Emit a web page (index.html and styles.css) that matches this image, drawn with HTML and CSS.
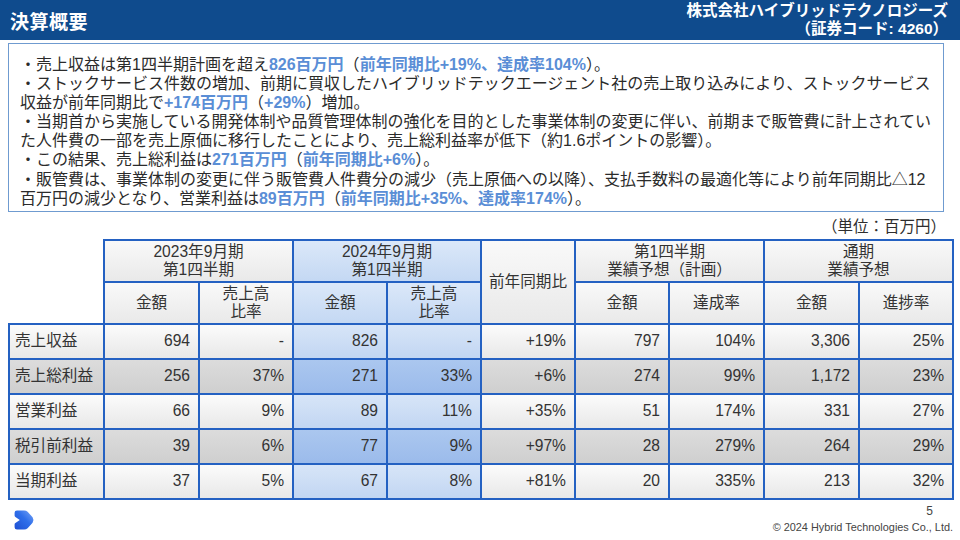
FILE: index.html
```html
<!DOCTYPE html>
<html lang="ja">
<head>
<meta charset="utf-8">
<title>決算概要</title>
<link rel="stylesheet" href="styles.css">
</head>
<body>
<header class="topbar">
  <div class="title">決算概要</div>
  <div class="company">株式会社ハイブリッドテクノロジーズ<br>（証券コード: 4260）</div>
</header>

<section class="summary">
  <div>・売上収益は第1四半期計画を超え<span class="hl">826百万円</span>（<span class="hl">前年同期比+19%、達成率104%</span>）。</div>
  <div>・ストックサービス件数の増加、前期に買収したハイブリッドテックエージェント社の売上取り込みにより、ストックサービス<br>収益が前年同期比で<span class="hl">+174百万円</span>（<span class="hl">+29%</span>）増加。</div>
  <div>・当期首から実施している開発体制や品質管理体制の強化を目的とした事業体制の変更に伴い、前期まで販管費に計上されてい<br>た人件費の一部を売上原価に移行したことにより、売上総利益率が低下（約1.6ポイントの影響）。</div>
  <div>・この結果、売上総利益は<span class="hl">271百万円</span>（<span class="hl">前年同期比+6%</span>）。</div>
  <div>・販管費は、事業体制の変更に伴う販管費人件費分の減少（売上原価への以降）、支払手数料の最適化等により前年同期比△12<br>百万円の減少となり、営業利益は<span class="hl">89百万円</span>（<span class="hl">前年同期比+35%、達成率174%</span>）。</div>
</section>

<div class="unit">（単位：百万円）</div>

<table class="fin">
  <colgroup>
    <col class="c95"><col class="c95"><col class="c94"><col class="c94"><col class="c94">
    <col class="c94"><col class="c94"><col class="c95"><col class="c95"><col class="c94">
  </colgroup>
  <thead>
    <tr class="h1">
      <th class="blank" rowspan="2"></th>
      <th class="hg" colspan="2">2023年9月期<br>第1四半期</th>
      <th class="hb" colspan="2">2024年9月期<br>第1四半期</th>
      <th class="hg" rowspan="2">前年同期比</th>
      <th class="hg" colspan="2">第1四半期<br>業績予想（計画）</th>
      <th class="hg" colspan="2">通期<br>業績予想</th>
    </tr>
    <tr class="h2">
      <th class="hg">金額</th>
      <th class="hg">売上高<br>比率</th>
      <th class="hb">金額</th>
      <th class="hb">売上高<br>比率</th>
      <th class="hg">金額</th>
      <th class="hg">達成率</th>
      <th class="hg">金額</th>
      <th class="hg">進捗率</th>
    </tr>
  </thead>
  <tbody>
    <tr class="odd">
      <td class="lbl">売上収益</td><td>694</td><td>-</td><td class="b">826</td><td class="b">-</td><td>+19%</td><td>797</td><td>104%</td><td>3,306</td><td>25%</td>
    </tr>
    <tr class="even">
      <td class="lbl">売上総利益</td><td>256</td><td>37%</td><td class="b">271</td><td class="b">33%</td><td>+6%</td><td>274</td><td>99%</td><td>1,172</td><td>23%</td>
    </tr>
    <tr class="odd">
      <td class="lbl">営業利益</td><td>66</td><td>9%</td><td class="b">89</td><td class="b">11%</td><td>+35%</td><td>51</td><td>174%</td><td>331</td><td>27%</td>
    </tr>
    <tr class="even">
      <td class="lbl">税引前利益</td><td>39</td><td>6%</td><td class="b">77</td><td class="b">9%</td><td>+97%</td><td>28</td><td>279%</td><td>264</td><td>29%</td>
    </tr>
    <tr class="odd">
      <td class="lbl">当期利益</td><td>37</td><td>5%</td><td class="b">67</td><td class="b">8%</td><td>+81%</td><td>20</td><td>335%</td><td>213</td><td>32%</td>
    </tr>
  </tbody>
</table>

<footer class="foot">
  <svg class="logo" viewBox="0 0 24 24" width="24" height="24" aria-label="logo">
    <defs>
      <linearGradient id="lg" x1="0" y1="1" x2="1" y2="0">
        <stop offset="0" stop-color="#1d4fd2"/>
        <stop offset="0.55" stop-color="#2f6fea"/>
        <stop offset="1" stop-color="#7aa6f6"/>
      </linearGradient>
    </defs>
    <path d="M5 2.5 H12.2 Q14.2 2.5 15.6 3.8 L20.6 9.2 Q22.4 12 20.6 14.8 L15.6 20.2 Q14.2 21.5 12.2 21.5 H5 Q2.6 21.5 2.6 19.2 V16.4 Q2.6 15.5 3.4 15 L7.8 12 L3.4 9 Q2.6 8.5 2.6 7.6 V4.8 Q2.6 2.5 5 2.5 Z" fill="url(#lg)"/>
  </svg>
  <div class="foot-right">
    <div class="page">5</div>
    <div class="copy">© 2024 Hybrid Technologies Co., Ltd.</div>
  </div>
</footer>
</body>
</html>
```

FILE: styles.css
```css
html, body {
  margin: 0;
  padding: 0;
}
body {
  width: 960px;
  height: 540px;
  overflow: hidden;
  background: #ffffff;
  font-family: "Liberation Sans", "Noto Sans CJK JP", sans-serif;
  color: #2e2e2e;
}

.topbar {
  height: 40px;
  background: #0f4b8d;
  color: #ffffff;
  display: flex;
  justify-content: space-between;
  align-items: center;
  padding: 0 12px 0 10px;
}
.title {
  font-size: 19px;
  font-weight: bold;
  letter-spacing: 0.5px;
}
.company {
  text-align: right;
  font-size: 15.5px;
  font-weight: bold;
  line-height: 18px;
}

.summary {
  margin: 3px 16px 0 8px;
  border: 1.5px solid #6f9bd0;
  padding: 11px 4px 3px 11px;
  font-size: 16px;
  line-height: 19.1px;
  white-space: nowrap;
  color: #2b2b2b;
}
.hl {
  color: #5a8ed6;
  font-weight: bold;
}

.unit {
  text-align: right;
  font-size: 15.5px;
  height: 27px;
  line-height: 24px;
  padding-top: 3px;
  box-sizing: border-box;
  padding-right: 14px;
}

.fin {
  margin-left: 8px;
  width: 944px;
  border-collapse: collapse;
  table-layout: fixed;
  font-size: 15.6px;
  color: #333333;
}
.c95 { width: 95px; }
.c94 { width: 94px; }

.fin th,
.fin td {
  border: 2px solid #2461c2;
  padding: 0 8px;
}
.fin th {
  font-weight: normal;
  text-align: center;
  line-height: 18px;
  padding: 0;
  white-space: nowrap;
}
.fin .h1 th,
.fin .h2 th {
  height: 40px;
}
.fin th.blank {
  border-top: none;
  border-left: none;
  background: #ffffff;
}
.fin th.hg {
  background: linear-gradient(#f9f9f9, #e9e9e9);
}
.fin th.hb {
  background: linear-gradient(#dbe8f9, #c4d8f3);
}

.fin td {
  height: 33px;
  text-align: right;
  line-height: 20px;
}
.fin td.lbl {
  text-align: left;
  padding-left: 5px;
}
.fin tr.odd td {
  background: linear-gradient(#fbfbfb, #e8e8e8);
}
.fin tr.even td {
  background: linear-gradient(#dcdcdc, #cfcfcf);
}
.fin tr.odd td.b {
  background: linear-gradient(#d7e5f8, #c2d6f2);
}
.fin tr.even td.b {
  background: linear-gradient(#abc7ef, #9bbbeb);
}

.foot {
  display: flex;
  justify-content: space-between;
  align-items: flex-start;
  padding: 8px 7px 0 12px;
}
.logo {
  display: block;
}
.foot-right {
  display: flex;
  flex-direction: column;
  align-items: flex-end;
  color: #444444;
  margin-top: -4px;
}
.page {
  font-size: 12px;
  line-height: 14px;
  padding-right: 20px;
}
.copy {
  font-size: 10.9px;
  line-height: 14px;
  margin-top: 2px;
}
```
